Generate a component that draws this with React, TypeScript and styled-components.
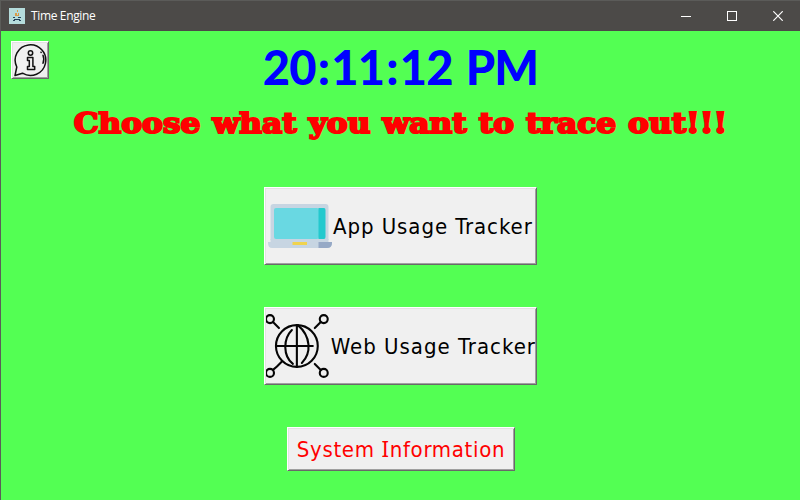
import React from 'react';
import styled, { createGlobalStyle } from 'styled-components';

const Global = createGlobalStyle`
  * { box-sizing: border-box; }
  body { margin: 0; overflow: hidden; }
`;

const Window = styled.div`
  width: 800px;
  height: 500px;
  display: flex;
  flex-direction: column;
  background: #53ff53;
  border-left: 1px solid #5b5c59;
  overflow: hidden;
`;

const TitleBar = styled.header`
  flex: none;
  height: 31px;
  display: flex;
  align-items: center;
  padding-left: 8px;
  background: #4c4a48;
  border-top: 1px solid #5b5b59;
`;

const Caption = styled.span`
  flex: 1;
  margin-left: 6px;
  font: 12px/16px 'Open Sans', 'Noto Sans', sans-serif;
  letter-spacing: -0.35px;
  color: #fff;
`;

const WindowControl = styled.div`
  width: 46px;
  height: 30px;
  display: grid;
  place-items: center;

  &:last-child { width: 45px; padding-left: 1px; }
`;

const Body = styled.main`
  flex: 1;
  display: grid;
  grid-template-columns: 38px 1fr 38px;
  grid-template-rows: 65px 60px 78px 42px 78px 42px 44px;
  padding: 0 10px;
`;

const Raised = styled.button`
  display: flex;
  align-items: center;
  padding: 0;
  background: #f0f0f0;
  border: 1px solid;
  border-color: #fff #696969 #696969 #fff;
  box-shadow: inset 1px 1px #e3e3e3, inset -1px -1px #a0a0a0;
  border-radius: 0;
  overflow: hidden;
  white-space: nowrap;
`;

const InfoButton = styled(Raised)`
  width: 38px;
  height: 38px;
  margin-top: 10px;
  justify-content: center;
`;

const Clock = styled.h1`
  margin: 0;
  padding-top: 6px;
  justify-self: center;
  font: 900 47px/60px Lato, sans-serif;
  letter-spacing: -0.9px;
  word-spacing: 3px;
  white-space: nowrap;
  color: #00f;
`;

const Colon = styled.span`
  margin: 0 2.2px;
`;

const Prompt = styled.h2`
  grid-column: 1 / -1;
  margin: 0;
  padding-top: 10px;
  justify-self: center;
  font: bold 27px/36px 'DejaVu Serif', serif;
  word-spacing: 1px;
  white-space: nowrap;
  color: #f00;
  -webkit-text-stroke: 2px #f00;
  stroke-linejoin: round;
  transform: scaleX(1.157);
`;

const TrackerButton = styled(Raised)<{ $row: number }>`
  grid-column: 2;
  grid-row: ${(p) => p.$row};
  justify-self: center;
  width: 273px;
  height: 78px;
  margin-top: 31px;
  padding-left: 1px;
`;

const Label = styled.span<{ $indent?: number; $spacing?: number }>`
  flex: none;
  margin-left: ${(p) => p.$indent ?? 0}px;
  padding-top: 2px;
  letter-spacing: ${(p) => p.$spacing ?? 0}px;
  font: 22px/28px 'DejaVu Sans Condensed', 'DejaVu Sans', sans-serif;
  color: #000;
`;

const SystemButton = styled(Raised)`
  grid-column: 2;
  grid-row: 7;
  justify-self: center;
  justify-content: center;
  width: 228px;
  height: 44px;
  margin: 31px 0 0 1px;
`;

const SystemLabel = styled(Label)`
  padding-top: 0;
  color: #f00;
`;

const SerifI = styled.span`
  font-family: 'Noto Sans', sans-serif;
  font-size: 22px;
`;

const AppIcon = () => (
  <svg width="16" height="16" viewBox="0 0 16 16">
    <path fill="#b5dcdc" d="M0 0h16v16H0z" />
    <path fill="#d99a48" d="M8 2h1v2H8zM6 5h2v3H6zM9 5h1v3H9zM7 7h2v1H7z" />
    <path fill="#27435c" d="M4 9h2v1H4zM9 9h3v1H9zM5 11h6v1H5zM4 12h2v1H4zM10 12h2v1h-2z" />
  </svg>
);

const InfoIcon = () => (
  <svg width="34" height="34" viewBox="0 0 34 34" fill="none" stroke="#111" strokeWidth="1.5" strokeLinejoin="round" strokeLinecap="round">
    <path d="M2 32.500 3.800 24A15.300 15.300 0 1 1 9.500 30.200Z" />
    <circle cx="17.500" cy="10" r="2.200" />
    <path d="M14.500 14.500h5.400v9h1.800v3h-7.200v-3h1.800v-6h-1.800z" />
    <path d="M30 12.300q1.700 4.200 0 8M28 9.200l.2.3" />
  </svg>
);

const LaptopIcon = () => (
  <svg width="66" height="66" viewBox="0 0 66 66">
    <path fill="#c7d5e2" d="M4.500 47V14q0-3 3-3h52q3 0 3 3v33z" />
    <rect x="8" y="15" width="45" height="31" rx="2" fill="#69d8e2" />
    <path fill="#23c9ce" d="M52.500 15H58q1.500 0 1.500 2v27q0 2-1.500 2h-5.500z" />
    <path fill="#c7d5e2" d="M4.500 46h58v3h-58zM2 49h64v1q0 5-5 5H6q-4 0-4-5z" />
    <path fill="#96a9c6" d="M52.500 49H66v1q0 5-5 5h-8.500z" />
    <path fill="#f0d34e" d="M26.500 49H41v3H26.500z" />
  </svg>
);

const GlobeIcon = () => (
  <svg width="66" height="66" viewBox="0 0 66 66" fill="none" stroke="#050505" strokeWidth="2.1" strokeLinecap="round">
    <circle cx="31" cy="33" r="21" />
    <path d="M31 12v42M10 33h37M26 17c-9 9-9 26 1 34M32 12c13 11 14 28 4 38" />
    <circle cx="4" cy="6" r="4" />
    <circle cx="58" cy="6" r="4" />
    <circle cx="4" cy="60" r="4" />
    <circle cx="58" cy="60" r="4" />
    <path d="m7 9 6 6M55 9l-6 6M7 57l4-3.500M11 53.500l5-5M55 57l-6-6" />
  </svg>
);

export default function App() {
  return (
    <>
      <Global />
      <Window>
        <TitleBar>
          <AppIcon />
          <Caption>Time Engine</Caption>
          <WindowControl>
            <svg width="10" height="10" shapeRendering="crispEdges"><path fill="#fff" d="M0 5h10v1H0z" /></svg>
          </WindowControl>
          <WindowControl>
            <svg width="10" height="10" fill="none" stroke="#fff" shapeRendering="crispEdges"><path d="M.5.5h9v9h-9z" /></svg>
          </WindowControl>
          <WindowControl>
            <svg width="10" height="10" fill="none" stroke="#fff" strokeWidth="1.2"><path d="m.3.3 9.400 9.400M9.700.3.3 9.700" /></svg>
          </WindowControl>
        </TitleBar>
        <Body>
          <InfoButton aria-label="Information"><InfoIcon /></InfoButton>
          <Clock>20<Colon>:</Colon>11<Colon>:</Colon>12 PM</Clock>
          <Prompt>Choose what you want to trace out!!!</Prompt>
          <TrackerButton $row={3}>
            <LaptopIcon />
            <Label $indent={1} $spacing={0.93}>App Usage Tracker</Label>
          </TrackerButton>
          <TrackerButton $row={5}>
            <GlobeIcon />
            <Label $indent={-1} $spacing={1}>Web Usage Tracker</Label>
          </TrackerButton>
          <SystemButton>
            <SystemLabel $spacing={0.68}>System <SerifI>I</SerifI>nformation</SystemLabel>
          </SystemButton>
        </Body>
      </Window>
    </>
  );
}
